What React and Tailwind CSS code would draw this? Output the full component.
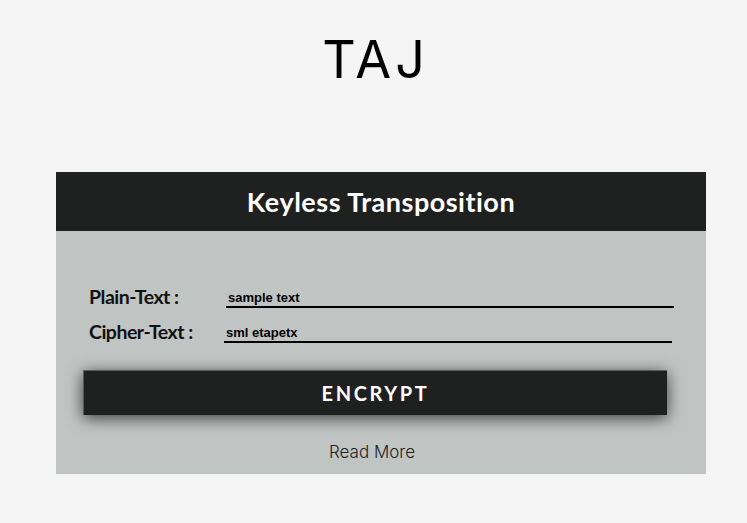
import React, { useState } from "react";

const App = () => {
  const [plain, setPlain] = useState("sample text");
  const [cipher, setCipher] = useState("sml etapetx");

  return (
    <main className="min-h-screen w-full bg-[#f5f5f5]">
      {/* Title */}
      <div className="flex justify-center pt-[30px]">
        <h1 className="text-[52px] leading-[60px] font-normal text-black font-['Inter',sans-serif] tracking-[4px] pl-[4px]">
          TAJ
        </h1>
      </div>

      {/* Card */}
      <div className="mx-[56px] mt-[82px] w-[650px]">
        <div className="h-[59px] bg-[#1f2020] flex items-center justify-center">
          <h2 className="text-white text-[27px] font-bold font-['Lato',sans-serif] tracking-[0.5px] pt-[2px]">
            Keyless Transposition
          </h2>
        </div>

        <div className="bg-[#c0c4c3] pt-[53px] pb-[10px]">
          {/* Plain text row */}
          <div className="flex items-end h-[24px] pl-[33px]">
            <label className="w-[137px] text-[19.5px] leading-[22px] font-bold text-[#111] font-['Lato',sans-serif] tracking-[-0.5px]">
              Plain-Text :
            </label>
            <input
              value={plain}
              onChange={(e) => setPlain(e.target.value)}
              className="w-[448px] h-[22px] pt-[3px] bg-transparent border-b-2 border-black outline-none px-[2px] text-[13px] font-bold text-black font-['Liberation_Sans',sans-serif]"
            />
          </div>

          {/* Cipher text row */}
          <div className="flex items-end h-[24px] mt-[11px] pl-[33px]">
            <label className="w-[135px] text-[19.5px] leading-[22px] font-bold text-[#111] font-['Lato',sans-serif] tracking-[-0.5px]">
              Cipher-Text :
            </label>
            <input
              value={cipher}
              onChange={(e) => setCipher(e.target.value)}
              className="w-[448px] h-[22px] pt-[3px] bg-transparent border-b-2 border-black outline-none px-[2px] text-[13px] font-bold text-black font-['Liberation_Sans',sans-serif]"
            />
          </div>

          {/* Encrypt button */}
          <div className="px-[27px] mt-[27px]">
            <button className="w-[584px] h-[45px] bg-[#1f2020] border-t border-l border-[#5a5c5c] text-white text-[20px] font-bold tracking-[2.6px] font-['Lato',sans-serif] shadow-[0_3px_16px_rgba(0,0,0,0.7)]">
              ENCRYPT
            </button>
          </div>

          {/* Read more */}
          <div className="flex justify-center mt-[25px] pr-[18px]">
            <a href="#" className="text-[17px] leading-[24px] text-[#222] font-['Inter',sans-serif] font-light">
              Read More
            </a>
          </div>
        </div>
      </div>
    </main>
  );
};

export default App;
